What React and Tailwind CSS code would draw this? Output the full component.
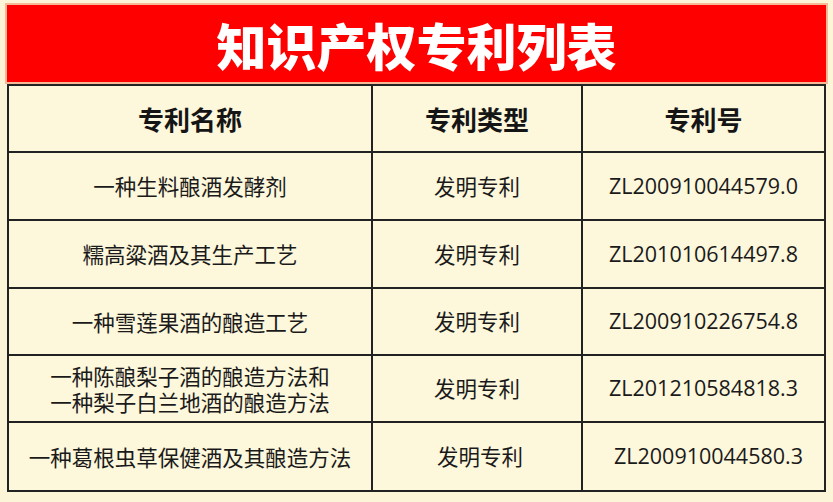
const rows = [
  { name: ["一种生料酿酒发酵剂"], type: "发明专利", no: "ZL200910044579.0" },
  { name: ["糯高粱酒及其生产工艺"], type: "发明专利", no: "ZL201010614497.8" },
  { name: ["一种雪莲果酒的酿造工艺"], type: "发明专利", no: "ZL200910226754.8" },
  {
    name: ["一种陈酿梨子酒的酿造方法和", "一种梨子白兰地酒的酿造方法"],
    type: "发明专利",
    no: "ZL201210584818.3",
  },
  { name: ["一种葛根虫草保健酒及其酿造方法"], type: "发明专利", no: "ZL200910044580.3", shift: true },
];

const App = () => {
  return (
    <div className="w-[833px] h-[502px] bg-[#fcf5d8] pt-[3px] font-['Noto_Sans_CJK_SC',sans-serif] overflow-hidden">
      {/* Title bar */}
      <div className="ml-[5px] w-[823px] h-[81px] border-2 border-[#f6b896] bg-[#ff0000] flex items-center justify-center">
        <h1 className="text-white text-[50px] font-black leading-none">
          知识产权专利列表
        </h1>
      </div>

      {/* Table */}
      <div className="ml-[7px] w-[819px] bg-[#222] p-[2px] grid grid-cols-[362px_208px_1fr] grid-rows-[65px_66px_66px_65px_65px_67px] gap-[2px]">
        {["专利名称", "专利类型", "专利号"].map((h) => (
          <div
            key={h}
            className="bg-[#fdf7dc] flex items-center justify-center text-[26px] font-bold text-[#151515]"
          >
            {h}
          </div>
        ))}

        {rows.map((r) => (
          <div key={r.no} className="contents">
            <div className="bg-[#fdf7dc] flex items-center justify-center text-center text-[21.5px] leading-[26px] text-[#1a1a1a]">
              <p>
                {r.name.map((line, i) => (
                  <span key={line}>
                    {i > 0 && <br />}
                    {line}
                  </span>
                ))}
              </p>
            </div>
            <div
              className={`bg-[#fdf7dc] flex items-center justify-center text-[21.5px] text-[#1a1a1a] ${
                r.shift ? "pl-[6px]" : ""
              }`}
            >
              {r.type}
            </div>
            <div
              className={`bg-[#fdf7dc] flex items-center justify-center text-[21.5px] text-[#1a1a1a] font-['Open_Sans','Noto_Sans_CJK_SC',sans-serif] ${
                r.shift ? "pl-[10px]" : ""
              }`}
            >
              {r.no}
            </div>
          </div>
        ))}
      </div>
    </div>
  );
};

export default App;
